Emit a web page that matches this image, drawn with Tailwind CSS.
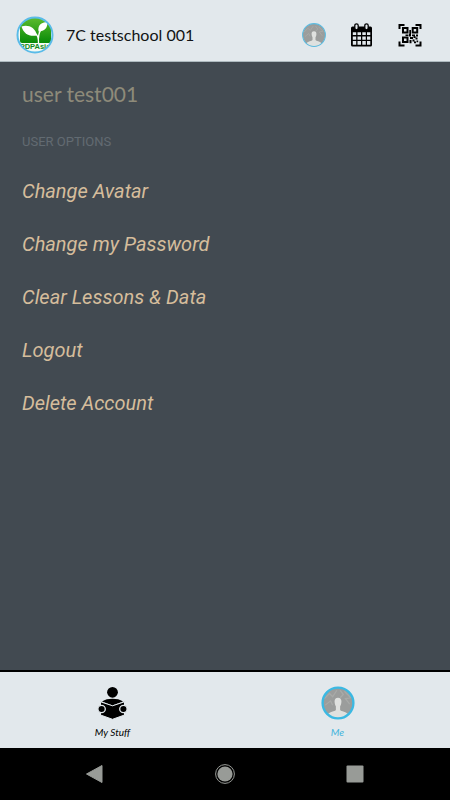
<!DOCTYPE html>
<html lang="en">
<head>
<meta charset="utf-8">
<meta name="viewport" content="width=device-width, initial-scale=1">
<title>User options</title>
<script src="https://cdn.jsdelivr.net/npm/@tailwindcss/browser@4"></script>
</head>
<body class="flex min-h-screen flex-col bg-[#424a51] font-['Lato',sans-serif]">
<svg class="absolute size-0" aria-hidden="true">
  <defs>
    <clipPath id="disc"><circle cx="16" cy="16" r="15"/></clipPath>
    <symbol id="avatar" viewBox="0 0 32 32">
      <g clip-path="url(#disc)">
        <rect width="32" height="32" fill="#9b9d9c"/>
        <path d="M3 12l5-5 3 3 4-6M18 4l3 4-3 3M22 5l6 6-5 1 4 5M4 18l5-4 2 4" fill="none" stroke="#a8aaa8" stroke-width="1.2"/>
        <path d="M16 11c-2.400 0-3.400 1.600-3.200 4 .1 1.800.6 3 1.200 4v3.500c-.6 1.400-6.500 1.600-8 4.500V32h20v-5c-1.500-2.900-7.400-3.100-8-4.500V19c.6-1 1.100-2.200 1.200-4 .2-2.400-.8-4-3.200-4z" fill="#dfe1df"/>
      </g>
    </symbol>
  </defs>
</svg>

<header class="flex h-[62px] items-center border-b border-[#aebabf] bg-[#e2e8ec] pr-7 pl-4 pt-2">
  <svg class="size-[38px]" viewBox="0 0 38 38" role="img" aria-label="PDPAsia">
    <defs>
      <clipPath id="logo-disc"><circle cx="19" cy="19" r="17.500"/></clipPath>
      <linearGradient id="leaf-bg" x1="0" y1="0" x2="0" y2="1"><stop offset="0" stop-color="#5cbb2c"/><stop offset="1" stop-color="#078a08"/></linearGradient>
    </defs>
    <g clip-path="url(#logo-disc)">
      <rect width="38" height="38" fill="#f4faf4"/>
      <rect x="4" y="2" width="31" height="25" rx="2" fill="url(#leaf-bg)"/>
      <path d="M5.500 10.500C12 8.500 19 11 21 19.500 13 21 7.500 17.500 5.500 10.500z" fill="#fff"/>
      <path d="M31.500 6C25 6 21.500 9.500 22.500 15.500 28.500 15.500 31.500 12 31.500 6z" fill="#fff"/>
      <path d="M20 18c2.500 2 2.500 5 2.500 9M22.500 27c-.5-6 0-10 2.500-13.500" fill="none" stroke="#fff" stroke-width="1.300"/>
      <text x="19" y="33" text-anchor="middle" font-family="Liberation Sans, sans-serif" font-weight="700" font-size="7.500" fill="#128a1c">PDPAsia</text>
    </g>
    <circle cx="19" cy="19" r="17.500" fill="none" stroke="#5abbe8" stroke-width="2"/>
  </svg>
  <h1 class="ml-3 flex-1 text-[16px] leading-6 text-[#111314]">7C testschool 001</h1>
  <div class="flex items-center gap-6">
    <button type="button" class="size-6" aria-label="Profile">
      <svg class="size-6" viewBox="0 0 32 32"><use href="#avatar"/><circle cx="16" cy="16" r="15.200" fill="none" stroke="#5bbbe0" stroke-width="1.400"/></svg>
    </button>
    <button type="button" class="size-6" aria-label="Calendar">
      <svg class="size-6" viewBox="0 0 24 24">
        <path fill="#000" fill-rule="evenodd" d="M2.500 3.500h18A1.500 1.500 0 0 1 22 5v17a1.500 1.500 0 0 1-1.500 1.500h-18A1.500 1.500 0 0 1 1 22V5a1.500 1.500 0 0 1 1.500-1.500zM2.800 9.200v2.900h3.400V9.200zM7.500 9.200v2.900H11V9.200zM12.300 9.200v2.900h3.500V9.200zM17 9.200v2.900h3.300V9.200zM2.800 13.400v3.300h3.400v-3.300zM7.500 13.400v3.300H11v-3.300zM12.300 13.400v3.300h3.500v-3.300zM17 13.400v3.300h3.300v-3.300zM2.800 18v3.700h3.400V18zM7.500 18v3.700H11V18zM12.300 18v3.700h3.500V18zM17 18v3.700h3.300V18z"/>
        <rect x="4.800" y=".8" width="3.400" height="6" rx="1.700" fill="#e2e8ec" stroke="#000" stroke-width="1.300"/>
        <rect x="14.800" y=".8" width="3.400" height="6" rx="1.700" fill="#e2e8ec" stroke="#000" stroke-width="1.300"/>
      </svg>
    </button>
    <button type="button" class="size-6" aria-label="Scan QR code">
      <svg class="size-6" viewBox="0 0 24 24">
        <path d="M1.500 6V2h5M17.500 2h5v4M1.500 18.500v4h5M17.500 22.500h5v-4" fill="none" stroke="#000" stroke-width="2"/>
        <path d="M5 5h4.500v4.500H5zM14.700 5h4.500v4.500h-4.500zM5 14.500h4.500V19H5z" fill="none" stroke="#000" stroke-width="2"/>
        <path d="M11.300 7h1.700v4h-1.700zM7.500 11.500h3v1.500h-3zM11 11h2v2.500h-2zM14 11.500h3v1.700h-3zM18 11.500h2v2h-2zM12 14h3v2h-3zM15.500 13h2v2h-2zM17.500 14.500h2v2h-2zM11.500 17h2v3.200h-2zM14.500 16.500h2v2h-2zM16 18.500h2v1.800h-2zM18.500 17.500h1.700v1.700h-1.700z" fill="#000"/>
      </svg>
    </button>
  </div>
</header>

<main class="flex-1 px-[22px] pt-[18px]">
  <h2 class="text-[21px] leading-7 text-[#8e8b7a]">user test001</h2>
  <h3 class="mt-6 font-['Roboto',sans-serif] text-[13px] leading-5 text-[#626b72]">USER OPTIONS</h3>
  <ul class="mt-3 font-['Roboto',sans-serif] text-[20px] italic text-[#d5bd9c]">
    <li><button type="button" class="h-[53px] w-full text-left">Change Avatar</button></li>
    <li><button type="button" class="h-[53px] w-full text-left">Change my Password</button></li>
    <li><button type="button" class="h-[53px] w-full text-left">Clear Lessons &amp; Data</button></li>
    <li><button type="button" class="h-[53px] w-full text-left">Logout</button></li>
    <li><button type="button" class="h-[53px] w-full text-left">Delete Account</button></li>
  </ul>
</main>

<nav class="grid h-[78px] grid-cols-2 border-t-2 border-black bg-[#e2e8ec] text-[10px] leading-4 italic" aria-label="Main">
  <a href="#stuff" class="flex flex-col items-center pt-[14px] text-black">
    <svg class="size-[34px]" viewBox="0 0 34 34" aria-hidden="true">
      <circle cx="16.500" cy="6.300" r="5.400"/>
      <path d="M6 15.500c3-2 6.500-2.700 10.500-2.700s7.500.7 10.500 2.700l-10.500 4z"/>
      <path d="M4.500 15.800l12 4 12-4v13.200l-12 4.300-12-4.300z" stroke="#e2e8ec" stroke-width="1"/>
      <g stroke="#e2e8ec" stroke-width="1.300"><circle cx="5.600" cy="23" r="3.700"/><circle cx="27.400" cy="23" r="3.700"/></g>
    </svg>
    <span class="mt-1">My Stuff</span>
  </a>
  <a href="#me" class="flex flex-col items-center pt-[14px] text-[#42b4dc]" aria-current="page">
    <svg class="size-[34px]" viewBox="0 0 32 32" aria-hidden="true"><use href="#avatar"/><circle cx="16" cy="16" r="14.500" fill="none" stroke="#3bb9e3" stroke-width="2.200"/></svg>
    <span class="mt-1">Me</span>
  </a>
</nav>

<div class="flex h-[52px] items-center justify-center gap-[50px] bg-black text-[#989b97]">
  <button type="button" class="flex w-20 justify-center" aria-label="Back"><svg class="size-5" viewBox="0 0 20 20" fill="currentColor"><path d="M17 1.500v17L1.500 10z" stroke="currentColor" stroke-linejoin="round"/></svg></button>
  <button type="button" class="flex w-20 justify-center" aria-label="Home"><svg class="size-5" viewBox="0 0 20 20" fill="currentColor"><circle cx="10" cy="10" r="7.600"/><circle cx="10" cy="10" r="9.400" fill="none" stroke="currentColor"/></svg></button>
  <button type="button" class="flex w-20 justify-center" aria-label="Recent apps"><svg class="size-5" viewBox="0 0 20 20" fill="currentColor"><rect x="1.500" y="1.500" width="17" height="17" rx="1"/></svg></button>
</div>
</body>
</html>
